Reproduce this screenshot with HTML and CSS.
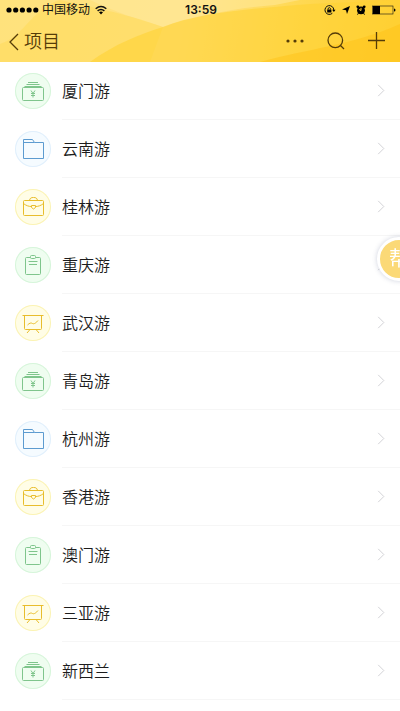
FILE: index.html
```html
<!DOCTYPE html>
<html lang="zh-CN">
<head>
<meta charset="utf-8">
<meta name="viewport" content="width=device-width, initial-scale=1">
<title>项目</title>
<link rel="stylesheet" href="styles.css">
</head>
<body>
<svg class="sprite" aria-hidden="true">
  <symbol id="money" viewBox="0 0 36 36">
    <path d="M13 9.500h10M11.500 11.500h13M9.500 13.500h17"/>
    <rect x="7.500" y="14.500" width="21" height="13" rx="1"/>
    <path d="M16 17.500l2 3 2-3M18 20.500v4M16 20.500h4M16 22.500h4"/>
  </symbol>
  <symbol id="folder" viewBox="0 0 36 36">
    <path d="M8.500 9.500V27.500H28.500V11.500H19.500L17.500 8.500H8.500V11.500H19.500"/>
  </symbol>
  <symbol id="case" viewBox="0 0 36 36">
    <rect x="8.500" y="11.500" width="20" height="15" rx="1"/>
    <path d="M14.500 11.500C15 9 16 8.500 18.500 8.500s3.500.5 4 3M8.500 14.500c2.500 2 5 3 8 3M28.500 14.500c-2.500 2-5 3-8 3M16.500 16.500h4v2l-2 1.500-2-1.500z"/>
  </symbol>
  <symbol id="clip" viewBox="0 0 36 36">
    <path d="M15.500 10.500h-4a1 1 0 0 0-1 1v15a1 1 0 0 0 1 1h13a1 1 0 0 0 1-1v-15a1 1 0 0 0-1-1h-4"/>
    <rect x="15.500" y="8.500" width="5" height="3" rx="1"/>
    <path d="M13.500 14.500h9M14 17.500h8"/>
  </symbol>
  <symbol id="board" viewBox="0 0 36 36">
    <path d="M7.500 10.500h21M9.500 10.500V23.500a1 1 0 0 0 1 1h15a1 1 0 0 0 1-1V10.500M12.500 20c2-2 3.500-2.500 5-1.500s4-1 5.500-3M15 24.500l-3 3.500M21 24.500l3 3.500"/>
  </symbol>
  <symbol id="chevron" viewBox="0 0 10 16">
    <path d="M2 2l6 6-6 6"/>
  </symbol>
</svg>

<header class="header">
  <svg class="scenery" viewBox="0 0 400 62" preserveAspectRatio="none" aria-hidden="true">
    <path class="sky" d="M90 0C115 12 140 20 163 27C195 16 235 8 275 5L300 0z"/>
    <path class="hill-far" d="M60 0C95 8 120 12 163 27L150 62H0V44C25 36 30 10 60 0z"/>
    <path class="hill-near" d="M90 62C115 44 140 34 163 27C200 12 260 8 310 4L400 0V62z"/>
    <path class="hill-front" d="M260 62C310 48 350 46 400 24V62z"/>
  </svg>
  <div class="status">
    <div class="carrier">
      <svg width="33" height="10" viewBox="0 0 33 10" aria-hidden="true"><circle cx="3" cy="5" r="2.600"/><circle cx="9.700" cy="5" r="2.600"/><circle cx="16.400" cy="5" r="2.600"/><circle cx="23.100" cy="5" r="2.600"/><circle cx="29.800" cy="5" r="2.600"/></svg>
      <span>中国移动</span>
      <svg class="wifi" width="12" height="10" viewBox="0 0 12 10" aria-hidden="true"><path class="wave" d="M.7 3.700Q6-.8 11.300 3.700M2.600 5.900Q6 3 9.400 5.900"/><path d="M4 7.300Q6 5.800 8 7.300L6 9.500z"/></svg>
    </div>
    <time class="clock">13:59</time>
    <div class="indicators">
      <svg width="12" height="10" viewBox="0 0 12 10" aria-hidden="true"><path class="line" d="M9.300 3A4.400 4.400 0 1 0 8.300 8.300M9.300 3Q9.800 4 9.700 5"/><rect x="3.200" y="4.500" width="4.200" height="3"/><path class="line" d="M4 4.500V3.500Q5.300 1.700 6.600 3.500v1"/><path d="M8.200 4.800h3.300L9.900 7z"/></svg>
      <svg width="8" height="10" viewBox="0 0 8 10" aria-hidden="true"><path d="M8 1L5 9 4 5.300 0 4.600z"/></svg>
      <svg width="10" height="10" viewBox="0 0 10 10" aria-hidden="true"><circle cx="5" cy="5.300" r="3.900"/><circle cx="1.800" cy="1.800" r="1.400"/><circle cx="8.200" cy="1.800" r="1.400"/><path d="M2.500 8l-1 1.700M7.500 8l1 1.700" class="line"/><path class="hands" d="M5 2.800v2.700l-1.800-1"/></svg>
      <svg width="24" height="10" viewBox="0 0 24 10" aria-hidden="true"><rect class="shell" x=".5" y="1" width="20.500" height="8"/><rect x="1" y="1" width="7" height="8"/><path d="M22 3.500q1.500 0 1.500 1.500T22 6.500z"/></svg>
    </div>
  </div>
  <nav class="bar">
    <button class="back" type="button">
      <svg width="11" height="18" viewBox="0 0 11 18" aria-hidden="true"><path d="M10 1L2 9l8 8"/></svg>
      <span>项目</span>
    </button>
    <div class="tools">
      <button type="button" aria-label="更多"><svg width="18" height="18" viewBox="0 0 18 18"><g class="dots"><circle cx="2" cy="9" r="1.600"/><circle cx="9" cy="9" r="1.600"/><circle cx="16" cy="9" r="1.600"/></g></svg></button>
      <button type="button" aria-label="搜索"><svg width="18" height="18" viewBox="0 0 18 18"><circle cx="8.300" cy="8.300" r="7.300"/><path d="M13.500 13.500L17 17"/></svg></button>
      <button type="button" aria-label="添加"><svg width="18" height="18" viewBox="0 0 18 18"><path d="M8.500 0v17M0 8.500h17"/></svg></button>
    </div>
  </nav>
</header>

<main>
  <ul class="list">
    <li><a class="row" href="#"><svg class="icon green"><use href="#money"/></svg><span class="name">厦门游</span><svg class="chevron"><use href="#chevron"/></svg></a></li>
    <li><a class="row" href="#"><svg class="icon blue"><use href="#folder"/></svg><span class="name">云南游</span><svg class="chevron"><use href="#chevron"/></svg></a></li>
    <li><a class="row" href="#"><svg class="icon yellow"><use href="#case"/></svg><span class="name">桂林游</span><svg class="chevron"><use href="#chevron"/></svg></a></li>
    <li><a class="row" href="#"><svg class="icon green"><use href="#clip"/></svg><span class="name">重庆游</span><svg class="chevron"><use href="#chevron"/></svg></a></li>
    <li><a class="row" href="#"><svg class="icon yellow"><use href="#board"/></svg><span class="name">武汉游</span><svg class="chevron"><use href="#chevron"/></svg></a></li>
    <li><a class="row" href="#"><svg class="icon green"><use href="#money"/></svg><span class="name">青岛游</span><svg class="chevron"><use href="#chevron"/></svg></a></li>
    <li><a class="row" href="#"><svg class="icon blue"><use href="#folder"/></svg><span class="name">杭州游</span><svg class="chevron"><use href="#chevron"/></svg></a></li>
    <li><a class="row" href="#"><svg class="icon yellow"><use href="#case"/></svg><span class="name">香港游</span><svg class="chevron"><use href="#chevron"/></svg></a></li>
    <li><a class="row" href="#"><svg class="icon green"><use href="#clip"/></svg><span class="name">澳门游</span><svg class="chevron"><use href="#chevron"/></svg></a></li>
    <li><a class="row" href="#"><svg class="icon yellow"><use href="#board"/></svg><span class="name">三亚游</span><svg class="chevron"><use href="#chevron"/></svg></a></li>
    <li><a class="row" href="#"><svg class="icon green"><use href="#money"/></svg><span class="name">新西兰</span><svg class="chevron"><use href="#chevron"/></svg></a></li>
  </ul>
</main>

<button class="help" type="button">帮</button>
</body>
</html>
```
FILE: styles.css
```css
* {
  box-sizing: border-box;
}

body {
  margin: 0;
  background: #fff;
  color: #1c1c1c;
  font-family: "Liberation Sans", "Noto Sans CJK SC", sans-serif;
}

button {
  padding: 0;
  border: 0;
  background: none;
  color: inherit;
  font: inherit;
}

svg {
  display: block;
  flex: none;
}

.sprite {
  position: absolute;
  width: 0;
  height: 0;
}

/* Header */
.header {
  position: relative;
  height: 62px;
  background: linear-gradient(100deg, #ffe27c, #ffe283 45%, #ffd850 75%, #ffcc30);
}

.scenery {
  position: absolute;
  inset: 0;
  width: 100%;
  height: 100%;
}

.sky {
  fill: #ffeaa0;
  opacity: 0.5;
}

.hill-far {
  fill: #ffd953;
  opacity: 0.45;
}

.hill-near {
  fill: #ffd233;
  opacity: 0.6;
}

.hill-front {
  fill: #ffbe10;
  opacity: 0.4;
}

.status {
  position: relative;
  display: grid;
  grid-template-columns: 1fr auto 1fr;
  align-items: center;
  height: 20px;
  padding: 0 4px 0 6px;
  color: #111;
  font-size: 12px;
  line-height: 20px;
}

.carrier,
.indicators {
  display: flex;
  align-items: center;
  gap: 6px;
}

.carrier {
  gap: 3px;
}

.wifi {
  margin-left: 2px;
}

.indicators {
  justify-content: flex-end;
}

.wave,
.line,
.shell {
  fill: none;
  stroke: #111;
}

.wave {
  stroke-width: 1.5;
}

.shell {
  stroke-width: 0.6;
}

.hands {
  fill: none;
  stroke: #ffd43a;
}

.clock {
  font-family: Inter, sans-serif;
  font-weight: 600;
}

.bar {
  position: relative;
  display: flex;
  align-items: center;
  justify-content: space-between;
  height: 42px;
  padding: 0 14px 0 8px;
  color: #553c08;
}

.bar svg {
  fill: none;
  stroke: currentColor;
  stroke-width: 1.3;
}

.bar .dots {
  fill: currentColor;
  stroke: none;
}

.back {
  display: flex;
  align-items: center;
  gap: 5px;
  padding-top: 1px;
  font-size: 18px;
  font-weight: 350;
  line-height: 24px;
}

.tools {
  display: flex;
  gap: 23px;
}

/* Project list */
.list {
  margin: 0;
  padding: 0;
  list-style: none;
}

.row {
  display: flex;
  align-items: center;
  height: 58px;
  padding-left: 15px;
  color: inherit;
  text-decoration: none;
}

.icon {
  width: 36px;
  height: 36px;
  border-radius: 50%;
  fill: none;
  stroke-width: 1;
}

.green {
  background: #effdf0;
  box-shadow: inset 0 0 0 1px #d6f5da;
  stroke: #7fc58c;
}

.blue {
  background: #f5fbff;
  box-shadow: inset 0 0 0 1px #e0effc;
  stroke: #5c9bd0;
}

.yellow {
  background: #fffde6;
  box-shadow: inset 0 0 0 1px #fbf3b4;
  stroke: #e8bd2c;
}

.name {
  flex: 1;
  align-self: stretch;
  margin-left: 11px;
  border-bottom: 1px solid #f6f6f6;
  font-size: 16px;
  font-weight: 350;
  line-height: 59px;
}

.chevron {
  align-self: stretch;
  width: 24px;
  height: 58px;
  padding: 21px 14px 21px 0;
  border-bottom: 1px solid #f6f6f6;
  fill: none;
  stroke: #ceced2;
  stroke-width: 1;
}

/* Floating help button, half tucked behind the right edge */
.help {
  position: fixed;
  top: 237px;
  right: -21px;
  width: 44px;
  height: 44px;
  border: 3px solid #fff;
  border-radius: 50%;
  background: #fbd977;
  box-shadow: 0 0 5px rgba(60, 70, 120, 0.25);
  color: #fff;
  font-size: 20px;
  line-height: 38px;
}
```
